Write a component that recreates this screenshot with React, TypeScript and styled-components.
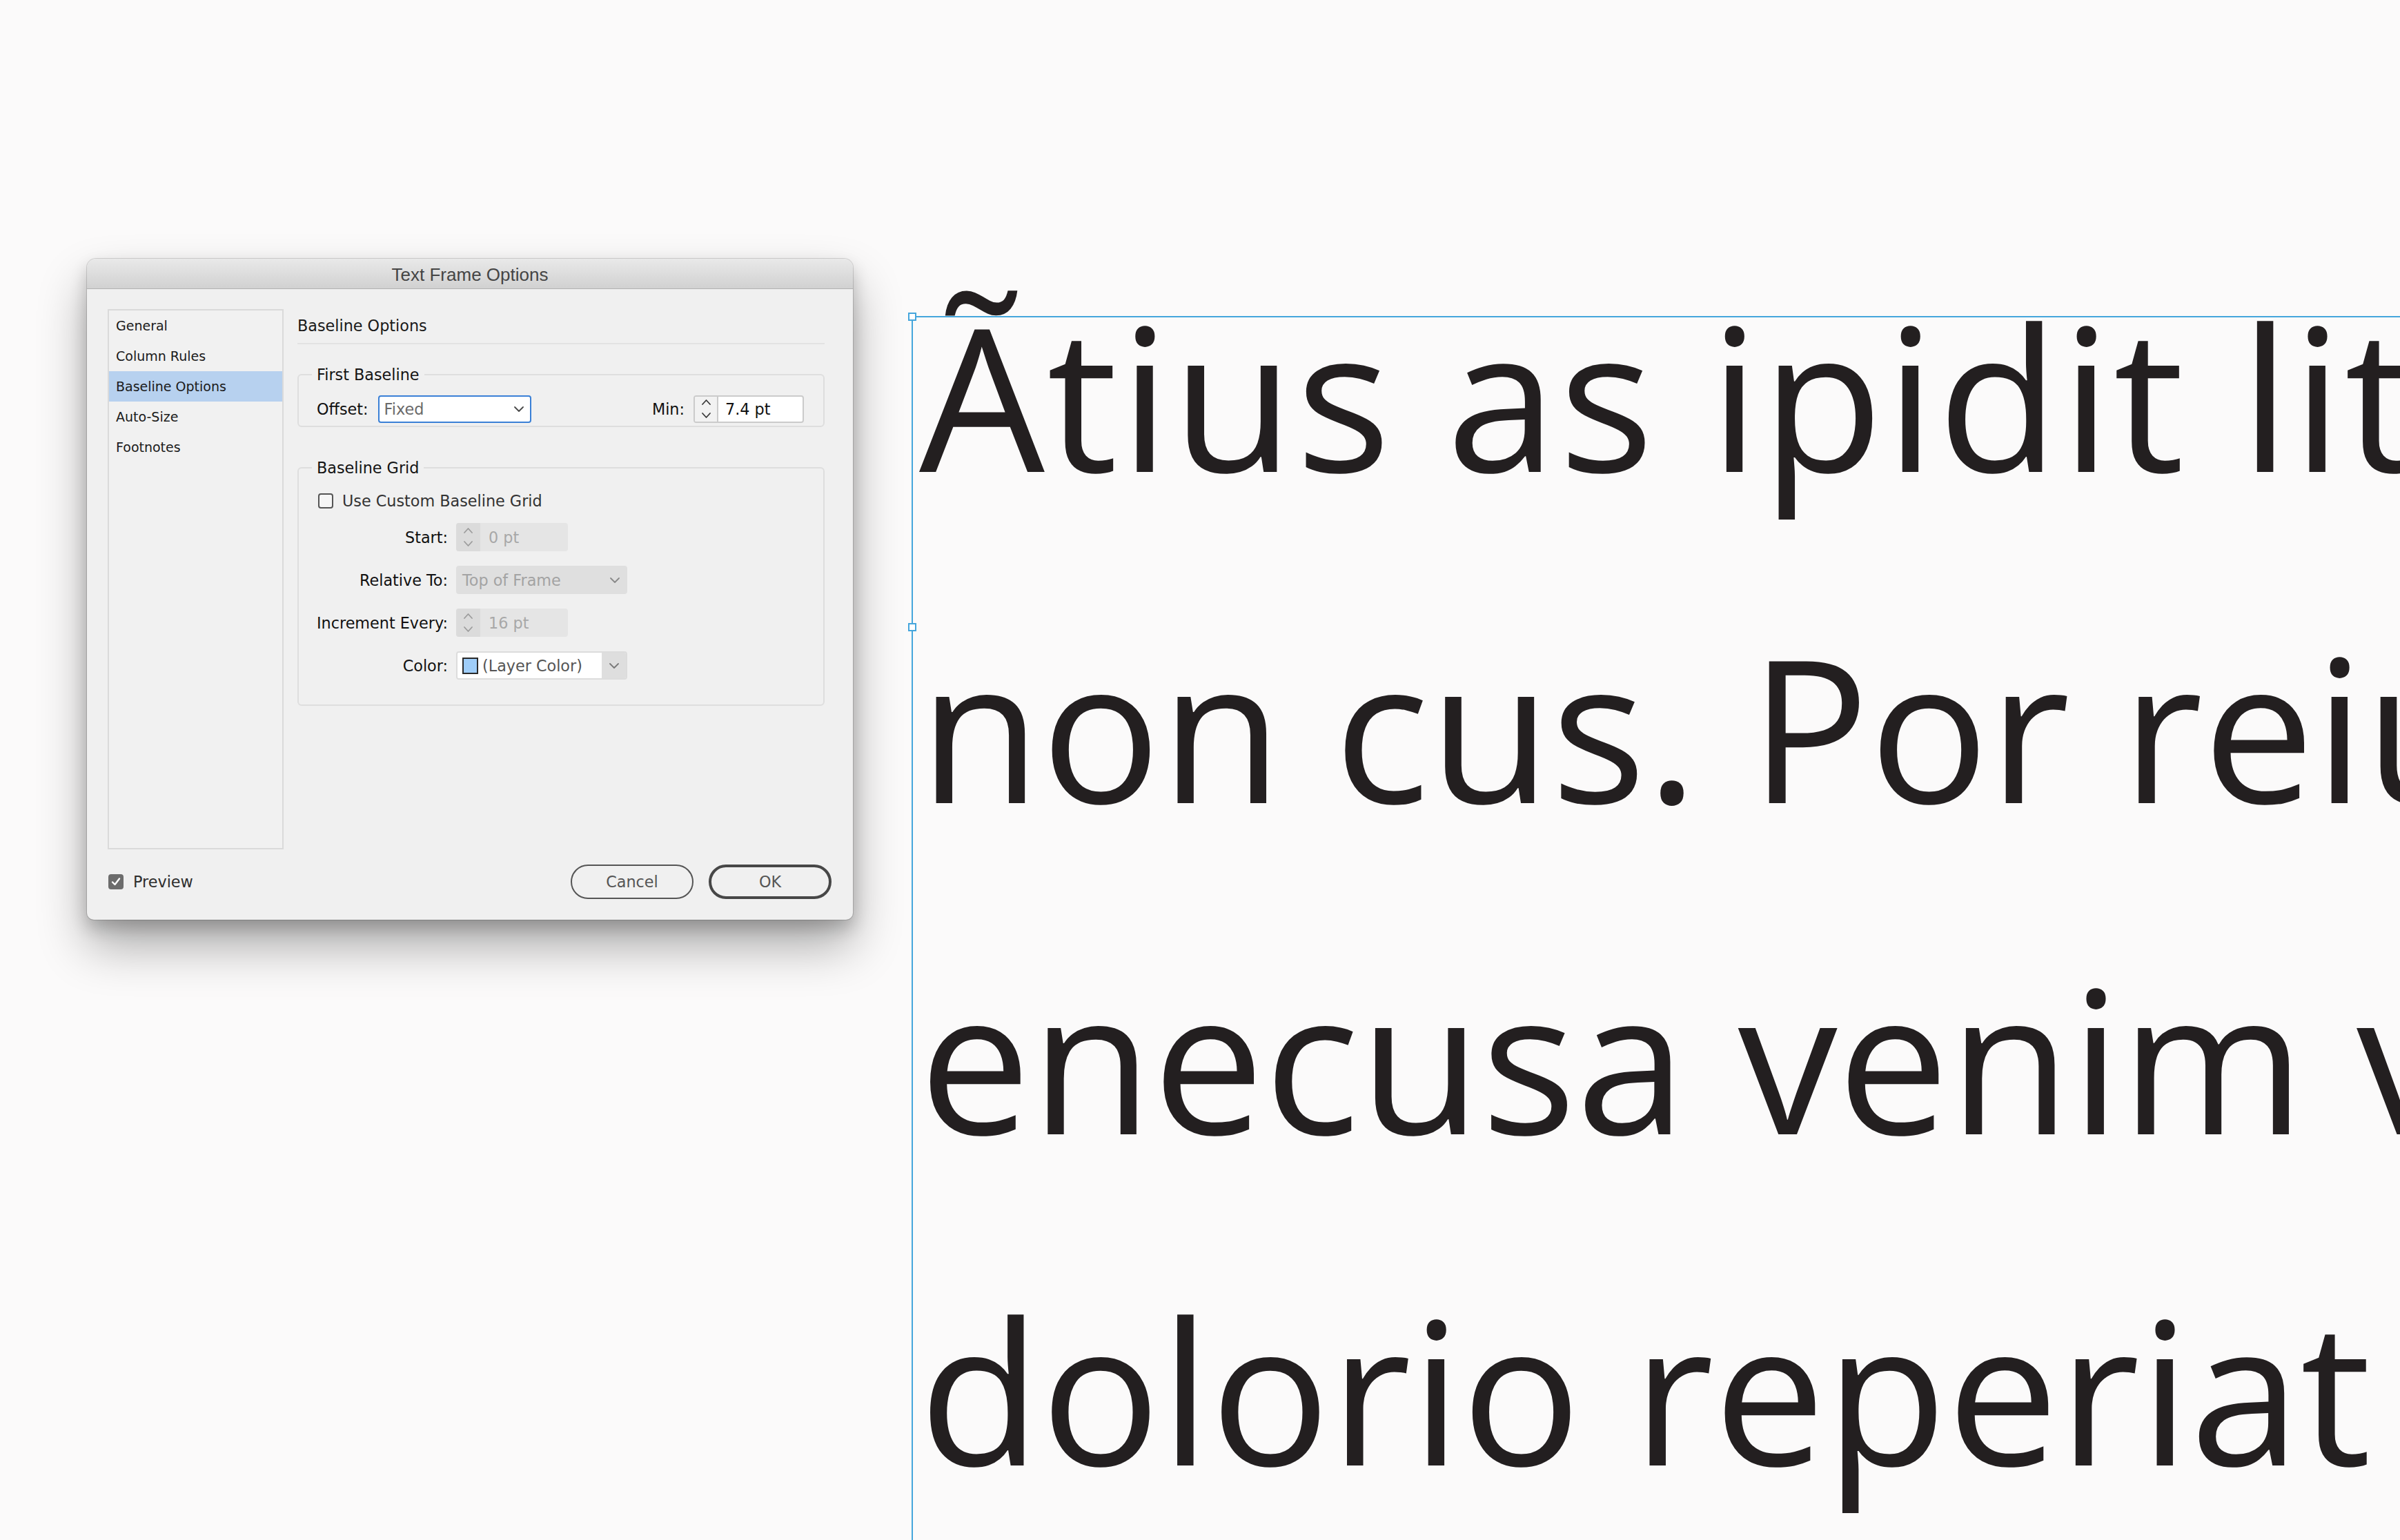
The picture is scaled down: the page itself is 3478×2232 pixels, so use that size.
import styled, { createGlobalStyle } from 'styled-components';

const UI_FONT = `"DejaVu Sans", "Liberation Sans", sans-serif`;

const GlobalStyle = createGlobalStyle`
  html, body {
    margin: 0;
    padding: 0;
    height: 100%;
    overflow: hidden;
    background: #fbfafa;
  }
  * {
    box-sizing: border-box;
  }
`;

const ChevronDown = ({ color = '#555' }: { color?: string }) => (
  <svg width="14" height="8" viewBox="0 0 14 8">
    <path d="M1 1 L7 7 L13 1" fill="none" stroke={color} strokeWidth="1.8" strokeLinecap="round" strokeLinejoin="round" />
  </svg>
);

const StepperArrows = ({ color = '#333' }: { color?: string }) => (
  <svg width="15" height="40" viewBox="0 0 15 40">
    <path d="M2 13 L7.5 7 L13 13" fill="none" stroke={color} strokeWidth="1.8" strokeLinecap="round" strokeLinejoin="round" />
    <path d="M2 26 L7.5 32 L13 26" fill="none" stroke={color} strokeWidth="1.8" strokeLinecap="round" strokeLinejoin="round" />
  </svg>
);

function App() {
  return (
    <>
      <GlobalStyle />
      <Page>
        <DialogSlot>
          <Dialog>
            <TitleBar>Text Frame Options</TitleBar>
            <DialogBody>
              <MainRow>
                <Sidebar>
                  <SidebarItem>General</SidebarItem>
                  <SidebarItem>Column Rules</SidebarItem>
                  <SidebarItem $active>Baseline Options</SidebarItem>
                  <SidebarItem>Auto-Size</SidebarItem>
                  <SidebarItem>Footnotes</SidebarItem>
                </Sidebar>

                <Content>
                  <SectionHeading>Baseline Options</SectionHeading>

                  <Group $mt={33} $pt={19} $pb={4}>
                    <Legend>First Baseline</Legend>
                    <OffsetRow>
                      <FieldPair $gap={14}>
                        <FieldLabel>Offset:</FieldLabel>
                        <Select $variant="focus" $w={222} $h={40}>
                          <SelectText>Fixed</SelectText>
                          <ChevronDown color="#4a4a4a" />
                        </Select>
                      </FieldPair>
                      <FieldPair $gap={13}>
                        <FieldLabel>Min:</FieldLabel>
                        <SpinField $w={160} $h={40}>
                          <Stepper>
                            <StepperArrows color="#3a3a3a" />
                          </Stepper>
                          <SpinValue>7.4 pt</SpinValue>
                        </SpinField>
                      </FieldPair>
                    </OffsetRow>
                  </Group>

                  <Group $mt={48} $pt={26} $pb={36}>
                    <Legend>Baseline Grid</Legend>
                    <FormGrid>
                      <CheckRow>
                        <CheckBox />
                        <CheckLabel>Use Custom Baseline Grid</CheckLabel>
                      </CheckRow>

                      <FieldLabel $right>Start:</FieldLabel>
                      <SpinField $disabled $w={162} $h={41}>
                        <Stepper $disabled>
                          <StepperArrows color="#9c9c9c" />
                        </Stepper>
                        <SpinValue $disabled>0 pt</SpinValue>
                      </SpinField>

                      <FieldLabel $right>Relative To:</FieldLabel>
                      <Select $variant="disabled" $w={248} $h={41}>
                        <SelectText $disabled>Top of Frame</SelectText>
                        <ChevronDown color="#8a8a8a" />
                      </Select>

                      <FieldLabel $right>Increment Every:</FieldLabel>
                      <SpinField $disabled $w={162} $h={41}>
                        <Stepper $disabled>
                          <StepperArrows color="#9c9c9c" />
                        </Stepper>
                        <SpinValue $disabled>16 pt</SpinValue>
                      </SpinField>

                      <FieldLabel $right>Color:</FieldLabel>
                      <ColorSelect>
                        <ColorValue>
                          <Swatch />
                          <SelectText $tone="#555">(Layer Color)</SelectText>
                        </ColorValue>
                        <ColorChevron>
                          <ChevronDown color="#7a7a7a" />
                        </ColorChevron>
                      </ColorSelect>
                    </FormGrid>
                  </Group>
                </Content>
              </MainRow>

              <Footer>
                <PreviewToggle>
                  <CheckBox $checked>
                    <svg width="18" height="18" viewBox="0 0 18 18">
                      <path d="M4 9.5 L7.5 13 L14 4.5" fill="none" stroke="#fff" strokeWidth="2.4" strokeLinecap="round" strokeLinejoin="round" />
                    </svg>
                  </CheckBox>
                  <CheckLabel $tone="#2e2e2e">Preview</CheckLabel>
                </PreviewToggle>
                <Buttons>
                  <DialogButton>Cancel</DialogButton>
                  <DialogButton $primary>OK</DialogButton>
                </Buttons>
              </Footer>
            </DialogBody>
          </Dialog>
        </DialogSlot>

        <Canvas>
          <TextFrame>
            <Handle $top={-7} />
            <Handle $top={443} />
            <FrameText>
              <TextLine $tracking={3}>Ãtius as ipidit lit atur</TextLine>
              <TextLine>non cus. Por reium</TextLine>
              <TextLine>enecusa venim vel</TextLine>
              <TextLine>dolorio reperiat aut</TextLine>
            </FrameText>
          </TextFrame>
        </Canvas>
      </Page>
    </>
  );
}

export default App;

const Page = styled.div`
  display: flex;
  align-items: flex-start;
  width: 100vw;
  height: 100vh;
  overflow: hidden;
  background: #fbfafa;
`;

const DialogSlot = styled.div`
  flex: none;
  padding: 375px 0 0 126px;
`;

const Dialog = styled.div`
  display: flex;
  flex-direction: column;
  width: 1110px;
  height: 958px;
  border-radius: 13px 13px 10px 10px;
  background: #f0f0f0;
  overflow: hidden;
  font-family: ${UI_FONT};
  box-shadow:
    0 0 0 1px rgba(0, 0, 0, 0.14),
    0 12px 24px rgba(0, 0, 0, 0.2),
    0 38px 70px rgba(0, 0, 0, 0.32);
`;

const TitleBar = styled.div`
  flex: none;
  height: 44px;
  padding-top: 3px;
  border-bottom: 1px solid #b2b2b2;
  background: linear-gradient(#e9e9e9, #d1d1d1);
  text-align: center;
  font-family: "Liberation Sans", Arial, sans-serif;
  font-size: 26px;
  line-height: 40px;
  color: #454545;
`;

const DialogBody = styled.div`
  display: flex;
  flex-direction: column;
  flex: 1;
  gap: 22px;
  padding: 29px 0 30px 0;
`;

const MainRow = styled.div`
  display: flex;
  gap: 20px;
  height: 783px;
  padding: 0 41px 0 30px;
`;

const Sidebar = styled.div`
  display: flex;
  flex-direction: column;
  flex: none;
  width: 255px;
  border: 2px solid #dadada;
  background: #f1f1f1;
`;

const SidebarItem = styled.div<{ $active?: boolean }>`
  height: 44px;
  padding-left: 10px;
  font-size: 19px;
  line-height: 44px;
  color: #1b1b1b;
  background: ${(p) => (p.$active ? '#b7d1ef' : 'transparent')};
`;

const Content = styled.div`
  display: flex;
  flex-direction: column;
  flex: 1;
  min-width: 0;
  font-size: 22.3px;
  color: #141414;
`;

const SectionHeading = styled.div`
  margin-top: 11px;
  padding-bottom: 12px;
  border-bottom: 2px solid #e3e3e3;
  line-height: 26px;
  color: #1a1a1a;
`;

const Group = styled.fieldset<{ $mt: number; $pt: number; $pb: number }>`
  margin: ${(p) => p.$mt}px 0 0 0;
  padding: ${(p) => p.$pt}px 28px ${(p) => p.$pb}px 26px;
  min-width: 0;
  border: 2px solid #dedede;
  border-radius: 6px;
`;

const Legend = styled.legend`
  margin-left: -7px;
  padding: 0 7px;
  line-height: 22px;
  color: #141414;
`;

const OffsetRow = styled.div`
  display: flex;
  align-items: center;
  justify-content: space-between;
  height: 40px;
`;

const FieldPair = styled.div<{ $gap: number }>`
  display: flex;
  align-items: center;
  gap: ${(p) => p.$gap}px;
`;

const FieldLabel = styled.span<{ $right?: boolean }>`
  justify-self: ${(p) => (p.$right ? 'end' : 'auto')};
  white-space: nowrap;
  color: #111;
`;

const Select = styled.div<{ $variant: 'focus' | 'disabled'; $w: number; $h: number }>`
  display: flex;
  align-items: center;
  justify-content: space-between;
  width: ${(p) => p.$w}px;
  height: ${(p) => p.$h}px;
  border-radius: 4px;
  padding: ${(p) => (p.$variant === 'focus' ? '0 9px 0 7px' : '0 11px 0 9px')};
  border: ${(p) => (p.$variant === 'focus' ? '2px solid #3a80d6' : 'none')};
  background: ${(p) => (p.$variant === 'focus' ? '#ffffff' : '#dfdfdf')};
`;

const SelectText = styled.span<{ $disabled?: boolean; $tone?: string }>`
  white-space: nowrap;
  color: ${(p) => p.$tone ?? (p.$disabled ? '#a3a3a3' : '#6a6a6a')};
`;

const SpinField = styled.div<{ $disabled?: boolean; $w: number; $h: number }>`
  display: flex;
  align-items: stretch;
  width: ${(p) => p.$w}px;
  height: ${(p) => p.$h}px;
  border-radius: 4px;
  overflow: hidden;
  border: ${(p) => (p.$disabled ? 'none' : '2px solid #cbcbcb')};
  background: ${(p) => (p.$disabled ? '#e5e5e5' : '#ffffff')};
`;

const Stepper = styled.div<{ $disabled?: boolean }>`
  display: flex;
  align-items: center;
  justify-content: center;
  flex: none;
  width: ${(p) => (p.$disabled ? '35px' : '34px')};
  background: ${(p) => (p.$disabled ? '#dbdbdb' : '#f2f2f2')};
  border-right: ${(p) => (p.$disabled ? 'none' : '2px solid #cbcbcb')};
`;

const SpinValue = styled.span<{ $disabled?: boolean }>`
  display: flex;
  align-items: center;
  padding-left: ${(p) => (p.$disabled ? '12px' : '10px')};
  white-space: nowrap;
  color: ${(p) => (p.$disabled ? '#a8a8a8' : '#111')};
`;

const FormGrid = styled.div`
  display: grid;
  grid-template-columns: max-content max-content;
  grid-template-rows: 22px repeat(4, 41px);
  column-gap: 12px;
  row-gap: 21px;
  align-items: center;
`;

const CheckRow = styled.div`
  grid-column: 1 / -1;
  display: flex;
  align-items: center;
  gap: 13px;
  height: 22px;
  padding-left: 2px;
`;

const CheckBox = styled.span<{ $checked?: boolean }>`
  display: flex;
  align-items: center;
  justify-content: center;
  flex: none;
  width: 22px;
  height: 22px;
  border-radius: 4px;
  border: 2px solid ${(p) => (p.$checked ? '#6c6c6c' : '#555')};
  background: ${(p) => (p.$checked ? '#6c6c6c' : '#f6f6f6')};
`;

const CheckLabel = styled.span<{ $tone?: string }>`
  white-space: nowrap;
  color: ${(p) => p.$tone ?? '#333'};
`;

const ColorSelect = styled.div`
  display: flex;
  width: 248px;
  height: 41px;
  border: 2px solid #dcdcdc;
  border-radius: 4px;
  overflow: hidden;
`;

const ColorValue = styled.div`
  display: flex;
  align-items: center;
  gap: 6px;
  flex: 1;
  padding-left: 7px;
  background: #ffffff;
`;

const Swatch = styled.span`
  flex: none;
  width: 23px;
  height: 24px;
  border: 2px solid #2a2a2a;
  background: #9fcdf8;
`;

const ColorChevron = styled.div`
  display: flex;
  align-items: center;
  justify-content: center;
  flex: none;
  width: 35px;
  background: #dedede;
`;

const Footer = styled.div`
  display: flex;
  align-items: center;
  justify-content: space-between;
  height: 50px;
  padding: 0 31px;
  font-size: 22.3px;
`;

const PreviewToggle = styled.div`
  display: flex;
  align-items: center;
  gap: 14px;
`;

const Buttons = styled.div`
  display: flex;
  gap: 22px;
`;

const DialogButton = styled.button<{ $primary?: boolean }>`
  width: 178px;
  height: 50px;
  padding: 0;
  border-radius: 25px;
  border: ${(p) => (p.$primary ? '4px solid #474747' : '2px solid #555')};
  background: transparent;
  font-family: ${UI_FONT};
  font-size: 22.3px;
  color: #555;
`;

const Canvas = styled.div`
  flex: 1;
  min-width: 0;
  height: 100vh;
  margin-left: 85px;
  padding-top: 458px;
`;

const TextFrame = styled.div`
  position: relative;
  height: 100%;
  padding-left: 9px;
  border-top: 2px solid #45a6dc;
  border-left: 2px solid #45a6dc;
`;

const Handle = styled.span<{ $top: number }>`
  position: absolute;
  left: -7px;
  top: ${(p) => p.$top}px;
  width: 12px;
  height: 12px;
  border: 2px solid #45a6dc;
  background: #ffffff;
`;

const FrameText = styled.div`
  margin-top: -128px;
  font-family: "Open Sans", "Noto Sans", sans-serif;
  font-size: 288px;
  line-height: 480px;
  color: #231f20;
`;

const TextLine = styled.div<{ $tracking?: number }>`
  white-space: nowrap;
  letter-spacing: ${(p) => p.$tracking ?? 0}px;
`;
